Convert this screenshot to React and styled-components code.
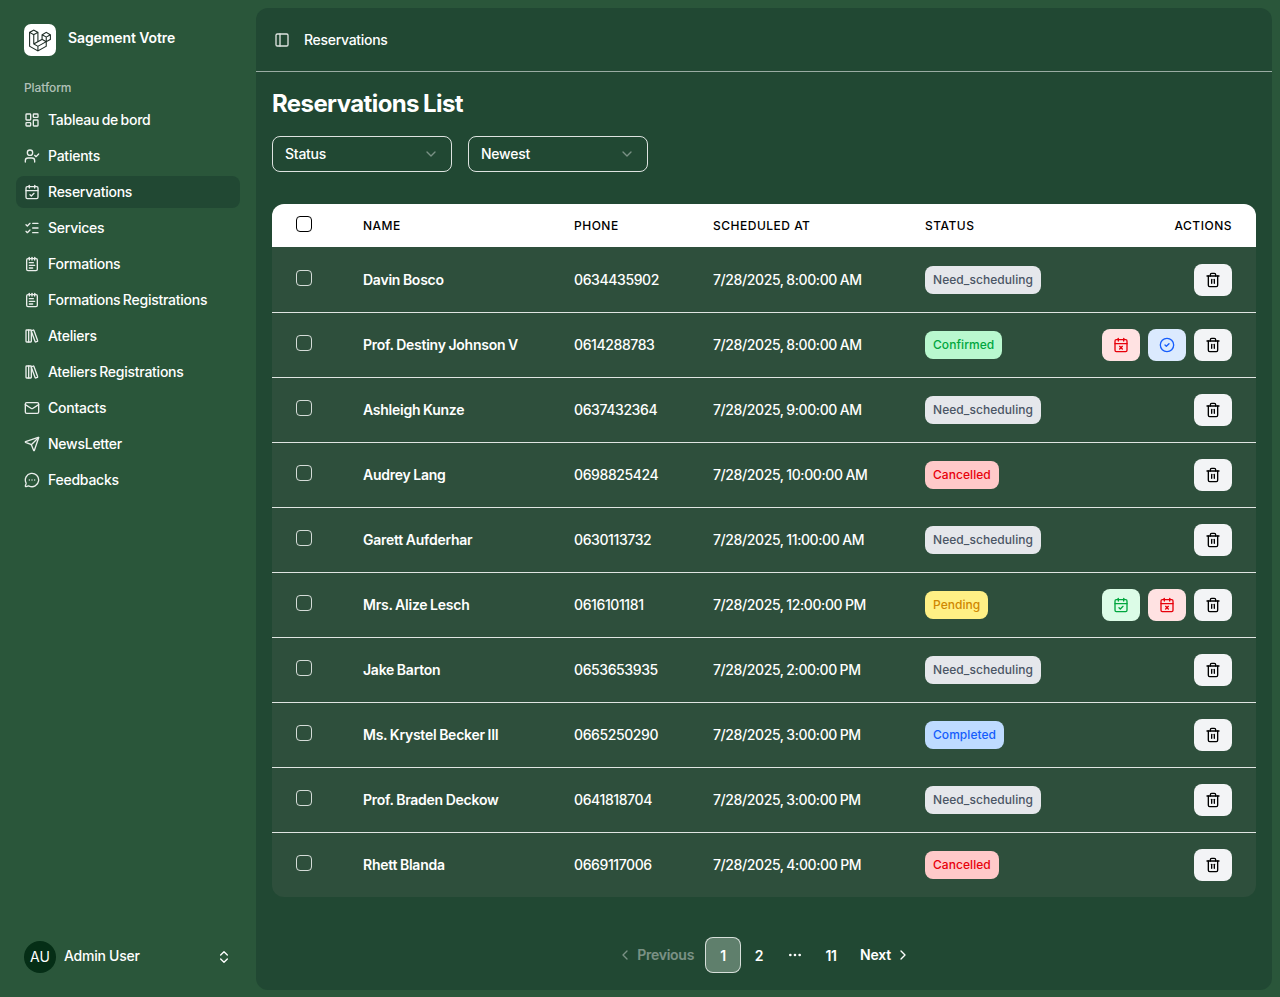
import React from 'react';
import styled, { createGlobalStyle } from 'styled-components';
import {
    LayoutDashboard, UserCheck, CalendarCheck, ListChecks, NotepadText, LibraryBig, Mail, Send,
    MessageCircleMore, ChevronsUpDown, PanelLeft, ChevronDown, ChevronLeft, ChevronRight,
    Trash2, CalendarX, CircleCheck, Ellipsis,
} from 'lucide-react';

const navItems = [
    { label: 'Tableau de bord', icon: LayoutDashboard },
    { label: 'Patients', icon: UserCheck },
    { label: 'Reservations', icon: CalendarCheck, active: true },
    { label: 'Services', icon: ListChecks },
    { label: 'Formations', icon: NotepadText },
    { label: 'Formations Registrations', icon: NotepadText },
    { label: 'Ateliers', icon: LibraryBig },
    { label: 'Ateliers Registrations', icon: LibraryBig },
    { label: 'Contacts', icon: Mail },
    { label: 'NewsLetter', icon: Send },
    { label: 'Feedbacks', icon: MessageCircleMore },
];

const reservations = [
    { name: 'Davin Bosco', phone: '0634435902', at: '7/28/2025, 8:00:00 AM', status: 'Need_scheduling' },
    { name: 'Prof. Destiny Johnson V', phone: '0614288783', at: '7/28/2025, 8:00:00 AM', status: 'Confirmed' },
    { name: 'Ashleigh Kunze', phone: '0637432364', at: '7/28/2025, 9:00:00 AM', status: 'Need_scheduling' },
    { name: 'Audrey Lang', phone: '0698825424', at: '7/28/2025, 10:00:00 AM', status: 'Cancelled' },
    { name: 'Garett Aufderhar', phone: '0630113732', at: '7/28/2025, 11:00:00 AM', status: 'Need_scheduling' },
    { name: 'Mrs. Alize Lesch', phone: '0616101181', at: '7/28/2025, 12:00:00 PM', status: 'Pending' },
    { name: 'Jake Barton', phone: '0653653935', at: '7/28/2025, 2:00:00 PM', status: 'Need_scheduling' },
    { name: 'Ms. Krystel Becker III', phone: '0665250290', at: '7/28/2025, 3:00:00 PM', status: 'Completed' },
    { name: 'Prof. Braden Deckow', phone: '0641818704', at: '7/28/2025, 3:00:00 PM', status: 'Need_scheduling' },
    { name: 'Rhett Blanda', phone: '0669117006', at: '7/28/2025, 4:00:00 PM', status: 'Cancelled' },
];

const statusColors = {
    Need_scheduling: ['#e5e7eb', '#4a5565'],
    Confirmed: ['#b9f8cf', '#00a63e'],
    Cancelled: ['#ffc9c9', '#e7000b'],
    Pending: ['#fff085', '#d08700'],
    Completed: ['#bedbff', '#155dfc'],
};

const tones = {
    gray: ['#f3f4f6', '#000000'],
    red: ['#ffe2e2', '#e7000b'],
    blue: ['#dbeafe', '#155dfc'],
    green: ['#dcfce7', '#00a63e'],
};

const GlobalStyle = createGlobalStyle`
    * { box-sizing: border-box; }
    html, body { margin: 0; padding: 0; }
    body {
        background: #2a563a;
        color: #ffffff;
        font-family: Inter, "Liberation Sans", sans-serif;
        font-size: 14px;
        letter-spacing: -0.25px;
        word-spacing: -1px;
    }
`;

const Shell = styled.div`
    display: flex;
    min-height: 100vh;
`;

const Sidebar = styled.aside`
    width: 256px;
    flex-shrink: 0;
    display: flex;
    flex-direction: column;
    padding: 24px 16px;
`;

// Text sits a little above the middle of its row
const Lifted = styled.span`
    margin-bottom: ${p => p.$by || 2}px;
`;

const Brand = styled.div`
    display: flex;
    align-items: center;
    gap: 12px;
    padding-left: 8px;
    height: 32px;
    font-weight: 600;
    letter-spacing: -0.1px;
    word-spacing: 0;
`;

const LogoTile = styled.div`
    width: 32px;
    height: 32px;
    border-radius: 7px;
    background: #ffffff;
    display: flex;
    align-items: center;
    justify-content: center;
    color: #1f2d26;
`;

const GroupLabel = styled.div`
    margin-top: 16px;
    padding-left: 8px;
    height: 32px;
    line-height: 32px;
    font-size: 12px;
    font-weight: 500;
    letter-spacing: -0.1px;
    color: rgba(255, 255, 255, 0.65);
`;

const Nav = styled.nav`
    display: flex;
    flex-direction: column;
    gap: 4px;
    flex: 1;
`;

const NavItem = styled.a`
    display: flex;
    align-items: center;
    gap: 8px;
    height: 32px;
    padding: 0 8px;
    border-radius: 8px;
    font-weight: 500;
    color: #ffffff;
    background: ${p => (p.$active ? '#214833' : 'transparent')};
    svg { flex-shrink: 0; opacity: 0.9; }
`;

const UserRow = styled.div`
    display: flex;
    align-items: center;
    gap: 8px;
    height: 32px;
    padding: 0 8px;
    font-weight: 500;
    word-spacing: 0;
    svg { margin-left: auto; }
`;

const Avatar = styled.div`
    width: 32px;
    height: 32px;
    border-radius: 50%;
    background: #052e16;
    display: flex;
    align-items: center;
    justify-content: center;
    font-weight: 400;
    letter-spacing: 0;
`;

const Main = styled.main`
    flex: 1;
    margin: 8px 8px 7px 0;
    background: #214833;
    border-radius: 12px;
`;

const TopBar = styled.header`
    height: 64px;
    display: flex;
    align-items: center;
    gap: 14px;
    padding: 0 18px;
    border-bottom: 1px solid rgba(255, 255, 255, 0.55);
    font-weight: 500;
    letter-spacing: -0.3px;
    svg { opacity: 0.85; }
`;

const Content = styled.div`
    padding: 16px;
`;

const Title = styled.h1`
    margin: 0 0 16px;
    font-size: 24px;
    line-height: 32px;
    font-weight: 700;
    letter-spacing: -0.6px;
`;

const Filters = styled.div`
    display: flex;
    gap: 16px;
    margin-bottom: 32px;
`;

const Select = styled.div`
    width: 180px;
    height: 36px;
    display: flex;
    align-items: center;
    justify-content: space-between;
    padding: 0 12px;
    border: 1px solid rgba(255, 255, 255, 0.85);
    border-radius: 8px;
    font-weight: 500;
    svg { opacity: 0.4; }
`;

const TableWrap = styled.div`
    border-radius: 12px;
    overflow: hidden;
    background: #2e4f3c;
`;

const Table = styled.table`
    width: 100%;
    border-collapse: collapse;
    table-layout: fixed;
`;

const Th = styled.th`
    height: 43px;
    width: ${p => p.$w || 'auto'};
    padding: 0 24px;
    background: #ffffff;
    color: #000000;
    font-size: 12px;
    font-weight: 500;
    letter-spacing: 0.5px;
    word-spacing: 0;
    text-transform: uppercase;
    text-align: ${p => p.$align || 'left'};
`;

const Tr = styled.tr`
    border-bottom: 1px solid rgba(255, 255, 255, 0.85);
    &:last-child { border-bottom: 0; }
    &:first-child td { padding-top: 1px; }
`;

const Td = styled.td`
    height: 65px;
    padding: 0 24px;
    font-weight: 500;
    letter-spacing: -0.4px;
    word-spacing: -0.5px;
    white-space: nowrap;
`;

const NameCell = styled(Td)`
    font-weight: 600;
    letter-spacing: -0.25px;
    word-spacing: -0.5px;
`;

const Checkbox = styled.span`
    display: block;
    width: 16px;
    height: 16px;
    margin-bottom: 4px;
    border-radius: 4px;
    border: 1px solid ${p => (p.$dark ? '#000000' : 'rgba(255, 255, 255, 0.8)')};
`;

const Badge = styled.span`
    display: inline-flex;
    align-items: center;
    height: 28px;
    padding: 0 8px;
    border-radius: 8px;
    font-size: 12px;
    font-weight: 500;
    letter-spacing: 0.05px;
    background: ${p => statusColors[p.$status][0]};
    color: ${p => statusColors[p.$status][1]};
`;

const Actions = styled.div`
    display: flex;
    justify-content: flex-end;
    gap: 8px;
`;

const ActionButton = styled.button`
    width: 38px;
    height: 32px;
    flex-shrink: 0;
    padding: 0;
    border: 0;
    border-radius: 8px;
    display: flex;
    align-items: center;
    justify-content: center;
    background: ${p => tones[p.$tone][0]};
    color: ${p => tones[p.$tone][1]};
`;

const Pagination = styled.nav`
    display: flex;
    justify-content: center;
    align-items: center;
    margin-top: 40px;
    font-weight: 600;
`;

const PageLink = styled.span`
    height: 36px;
    min-width: 36px;
    display: flex;
    align-items: center;
    justify-content: center;
    gap: 4px;
    padding: ${p => (p.$wide ? '0 10px' : '0')};
    border-radius: 8px;
    border: 1px solid ${p => (p.$current ? 'rgba(255, 255, 255, 0.75)' : 'transparent')};
    background: ${p => (p.$current ? '#5f7f6c' : 'transparent')};
    opacity: ${p => (p.$disabled ? 0.4 : 1)};
`;

const LaravelLogo = () => (
    <svg width="22" height="23" viewBox="0 0 40 42" fill="currentColor">
        <path fillRule="evenodd" clipRule="evenodd" d="M17.2 5.633 8.6.855 0 5.633v26.51l16.2 9 16.2-9v-8.442l7.6-4.223V9.856l-8.6-4.777-8.6 4.777V18.3l-5.6 3.111V5.633ZM38 18.301l-5.6 3.11v-6.157l5.6-3.11V18.3Zm-1.06-7.856-5.54 3.078-5.54-3.079 5.54-3.078 5.54 3.079ZM24.8 18.3v-6.157l5.6 3.111v6.158L24.8 18.3Zm-1 1.732 5.54 3.078-13.14 7.302-5.54-3.078 13.14-7.3v-.002Zm-16.2 7.89 7.6 4.222V38.3L2 30.966V7.92l5.6 3.111v16.892ZM8.6 9.3 3.06 6.222 8.6 3.143l5.54 3.08L8.6 9.3Zm21.8 15.51-13.2 7.334V38.3l13.2-7.334v-6.156ZM9.6 11.034l5.6-3.11v14.6l-5.6 3.11v-14.6Z" />
    </svg>
);

const RowActions = ({ status }) => (
    <Actions>
        {status === 'Confirmed' && (
            <>
                <ActionButton $tone="red"><CalendarX size={16} /></ActionButton>
                <ActionButton $tone="blue"><CircleCheck size={16} /></ActionButton>
            </>
        )}
        {status === 'Pending' && (
            <>
                <ActionButton $tone="green"><CalendarCheck size={16} /></ActionButton>
                <ActionButton $tone="red"><CalendarX size={16} /></ActionButton>
            </>
        )}
        <ActionButton $tone="gray"><Trash2 size={16} /></ActionButton>
    </Actions>
);

const App = () => {
    return (
        <Shell>
            <GlobalStyle />
            <Sidebar>
                <Brand>
                    <LogoTile><LaravelLogo /></LogoTile>
                    <Lifted $by={5}>Sagement Votre</Lifted>
                </Brand>
                <GroupLabel>Platform</GroupLabel>
                <Nav>
                    {navItems.map(({ label, icon: Icon, active }) => (
                        <NavItem key={label} $active={active}>
                            <Icon size={16} />
                            <Lifted>{label}</Lifted>
                        </NavItem>
                    ))}
                </Nav>
                <UserRow>
                    <Avatar><Lifted>AU</Lifted></Avatar>
                    <Lifted $by={3}>Admin User</Lifted>
                    <ChevronsUpDown size={16} />
                </UserRow>
            </Sidebar>
            <Main>
                <TopBar>
                    <PanelLeft size={16} />
                    Reservations
                </TopBar>
                <Content>
                    <Title>Reservations List</Title>
                    <Filters>
                        <Select><Lifted>Status</Lifted> <ChevronDown size={16} /></Select>
                        <Select><Lifted>Newest</Lifted> <ChevronDown size={16} /></Select>
                    </Filters>
                    <TableWrap>
                        <Table>
                            <thead>
                                <tr>
                                    <Th $w="67px"><Checkbox $dark /></Th>
                                    <Th $w="211px">Name</Th>
                                    <Th $w="139px">Phone</Th>
                                    <Th $w="212px">Scheduled at</Th>
                                    <Th $w="170px">Status</Th>
                                    <Th $align="right">Actions</Th>
                                </tr>
                            </thead>
                            <tbody>
                                {reservations.map(r => (
                                    <Tr key={r.name}>
                                        <Td><Checkbox /></Td>
                                        <NameCell>{r.name}</NameCell>
                                        <Td>{r.phone}</Td>
                                        <Td>{r.at}</Td>
                                        <Td><Badge $status={r.status}>{r.status}</Badge></Td>
                                        <Td><RowActions status={r.status} /></Td>
                                    </Tr>
                                ))}
                            </tbody>
                        </Table>
                    </TableWrap>
                    <Pagination>
                        <PageLink $wide $disabled><ChevronLeft size={16} /> <Lifted>Previous</Lifted></PageLink>
                        <PageLink $current>1</PageLink>
                        <PageLink>2</PageLink>
                        <PageLink><Ellipsis size={16} /></PageLink>
                        <PageLink>11</PageLink>
                        <PageLink $wide><Lifted>Next</Lifted> <ChevronRight size={16} /></PageLink>
                    </Pagination>
                </Content>
            </Main>
        </Shell>
    );
};

export default App;
